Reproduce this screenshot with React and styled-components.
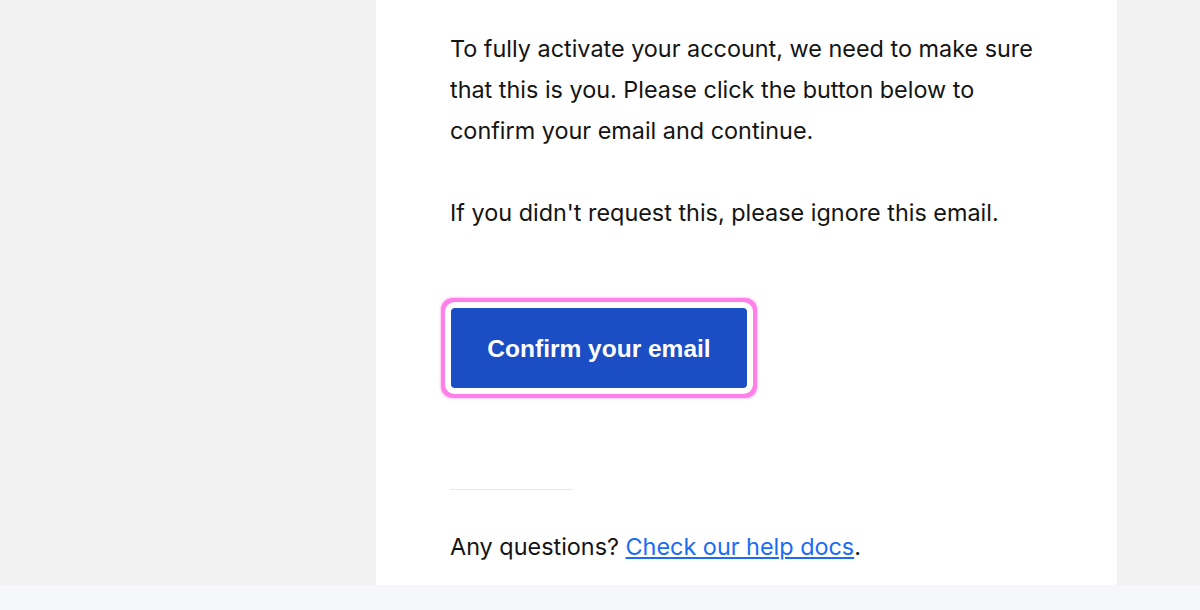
import React from "react";
import styled, { createGlobalStyle } from "styled-components";

const Global = createGlobalStyle`
  html, body { margin: 0; padding: 0; background: #f2f2f2; }
  body { font-family: Inter, "Liberation Sans", Arial, sans-serif; }
`;

const Page = styled.div`
  width: 1200px;
  height: 610px;
  display: flex;
  flex-direction: column;
  overflow: hidden;
`;

const Stage = styled.div`
  height: 585px;
  background: #f2f2f2;
  display: flex;
  justify-content: flex-start;
  padding-left: 376px;
  box-sizing: border-box;
`;

const Card = styled.div`
  width: 741px;
  background: #ffffff;
  box-sizing: border-box;
  padding: 28px 74px 0 74px;
  color: #141414;
  font-size: 23.4px;
  line-height: 41px;
`;

const Para = styled.p`
  margin: 0 0 ${(p) => p.$gap || 0}px 0;
`;

const ButtonRow = styled.div`
  margin-top: 75px;
  display: flex;
  padding-left: 1px;
`;

const ConfirmButton = styled.a`
  display: flex;
  align-items: center;
  justify-content: center;
  width: 296px;
  height: 80px;
  background: #1b4dc4;
  color: #ffffff;
  font-family: "Liberation Sans", Arial, sans-serif;
  font-weight: 700;
  font-size: 24.5px;
  border-radius: 4px;
  text-decoration: none;
  box-shadow: 0 0 0 6px #ffffff, 0 0 0 10px #ff80e8, 0 0 2px 11px rgba(255, 128, 232, 0.4);
`;

const Divider = styled.hr`
  margin: 101px 0 0 0;
  width: 123px;
  border: none;
  border-top: 1px solid #e8e8e8;
`;

const Footer = styled.p`
  margin: 36px 0 0 0;
`;

const Link = styled.a`
  color: #1a6cf5;
  text-decoration: underline;
`;

const Band = styled.div`
  flex: 1;
  background: #f6f7fb;
`;

export default function App() {
  return (
    <Page>
      <Global />
      <Stage>
        <Card>
          <Para $gap={41}>
            To fully activate your account, we need to make sure that this is you. Please click the button below to
            confirm your email and continue.
          </Para>
          <Para>If you didn't request this, please ignore this email.</Para>
          <ButtonRow>
            <ConfirmButton href="#">Confirm your email</ConfirmButton>
          </ButtonRow>
          <Divider />
          <Footer>
            Any questions? <Link href="#">Check our help docs</Link>.
          </Footer>
        </Card>
      </Stage>
      <Band />
    </Page>
  );
}
